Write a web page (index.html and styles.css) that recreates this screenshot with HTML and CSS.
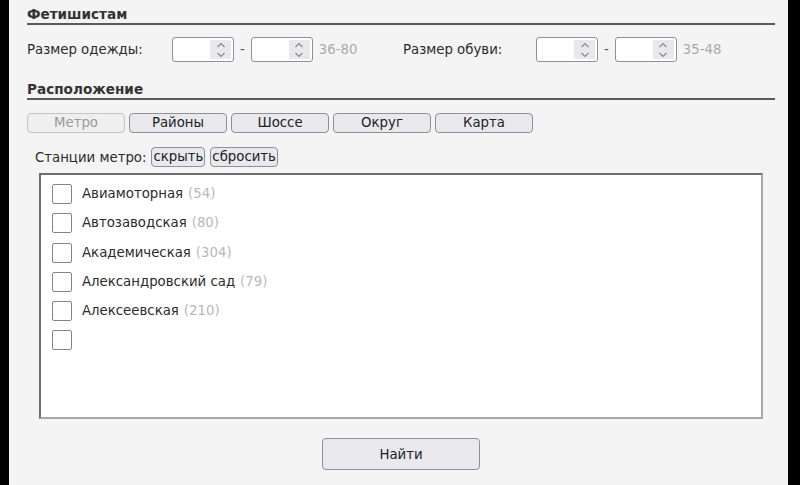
FILE: index.html
```html
<!DOCTYPE html>
<html lang="ru">
<head>
<meta charset="utf-8">
<title>Поиск</title>
<link rel="stylesheet" href="styles.css">
</head>
<body>
<div class="page">
  <div class="panel">
    <h2 class="sect first-sect">Фетишистам</h2>
    <div class="sizes">
      <div class="fgroup g1">
        <span class="flabel l1">Размер одежды:</span>
        <span class="num"><input type="text" class="num-in"><span class="spin"><svg width="10" height="18" viewBox="0 0 10 18"><path d="M1.5 6 L5 2.5 L8.5 6" fill="none" stroke="#8a8a8a" stroke-width="1.2"/><path d="M1.5 12 L5 15.5 L8.5 12" fill="none" stroke="#8a8a8a" stroke-width="1.2"/></svg></span></span>
        <span class="dash">-</span>
        <span class="num"><input type="text" class="num-in"><span class="spin"><svg width="10" height="18" viewBox="0 0 10 18"><path d="M1.5 6 L5 2.5 L8.5 6" fill="none" stroke="#8a8a8a" stroke-width="1.2"/><path d="M1.5 12 L5 15.5 L8.5 12" fill="none" stroke="#8a8a8a" stroke-width="1.2"/></svg></span></span>
        <span class="range">36-80</span>
      </div>
      <div class="fgroup g2">
        <span class="flabel l2">Размер обуви:</span>
        <span class="num"><input type="text" class="num-in"><span class="spin"><svg width="10" height="18" viewBox="0 0 10 18"><path d="M1.5 6 L5 2.5 L8.5 6" fill="none" stroke="#8a8a8a" stroke-width="1.2"/><path d="M1.5 12 L5 15.5 L8.5 12" fill="none" stroke="#8a8a8a" stroke-width="1.2"/></svg></span></span>
        <span class="dash">-</span>
        <span class="num"><input type="text" class="num-in"><span class="spin"><svg width="10" height="18" viewBox="0 0 10 18"><path d="M1.5 6 L5 2.5 L8.5 6" fill="none" stroke="#8a8a8a" stroke-width="1.2"/><path d="M1.5 12 L5 15.5 L8.5 12" fill="none" stroke="#8a8a8a" stroke-width="1.2"/></svg></span></span>
        <span class="range">35-48</span>
      </div>
    </div>

    <h2 class="sect second-sect">Расположение</h2>
    <div class="tabs">
      <button class="tab" disabled>Метро</button>
      <button class="tab">Районы</button>
      <button class="tab">Шоссе</button>
      <button class="tab">Округ</button>
      <button class="tab">Карта</button>
    </div>

    <div class="stations-row">
      <span class="st-label">Станции метро:</span>
      <button class="mini">скрыть</button>
      <button class="mini">сбросить</button>
    </div>

    <div class="listbox">
      <label class="item"><span class="cb"></span><span class="name">Авиамоторная</span><span class="cnt">(54)</span></label>
      <label class="item"><span class="cb"></span><span class="name">Автозаводская</span><span class="cnt">(80)</span></label>
      <label class="item"><span class="cb"></span><span class="name">Академическая</span><span class="cnt">(304)</span></label>
      <label class="item"><span class="cb"></span><span class="name">Александровский сад</span><span class="cnt">(79)</span></label>
      <label class="item"><span class="cb"></span><span class="name">Алексеевская</span><span class="cnt">(210)</span></label>
      <label class="item"><span class="cb"></span></label>
    </div>

    <div class="submit-row">
      <button class="find">Найти</button>
    </div>
  </div>
</div>
</body>
</html>
```

FILE: styles.css
```css
html, body {
  margin: 0;
  padding: 0;
}
body {
  background: #000;
  font-family: "DejaVu Sans", Verdana, sans-serif;
  font-size: 13.3px;
  color: #2b2b2b;
}
.page {
  display: flex;
  height: 485px;
  background: #000;
  overflow: hidden;
}
.panel {
  margin-left: 9px;
  width: 779px;
  box-sizing: border-box;
  background: #f4f4f4;
  padding: 0 13px 0 18px;
}
.sect {
  margin: 0;
  font-size: 13.6px;
  font-weight: bold;
  color: #333;
  line-height: 18px;
  padding-top: 5px;
  border-bottom: 2px solid #5a5a5a;
}
.second-sect {
  margin-top: 13px;
}
.sizes {
  display: flex;
  align-items: center;
  margin-top: 12px;
  height: 25px;
}
.fgroup {
  display: flex;
  align-items: center;
  gap: 6px;
}
.g1 {
  width: 376px;
}
.flabel {
  color: #2b2b2b;
}
.l1 {
  width: 139px;
}
.l2 {
  width: 127px;
}
.num {
  display: flex;
  align-items: stretch;
  width: 62px;
  height: 25px;
  box-sizing: border-box;
  border: 1px solid #8f8f9d;
  border-radius: 3px;
  background: #fff;
  padding: 2px 2px 2px 0;
}
.num-in {
  flex: 1;
  min-width: 0;
  border: none;
  outline: none;
  background: transparent;
  padding: 0 4px;
  font: inherit;
}
.spin {
  width: 21px;
  background: #e9e9ed;
  display: flex;
  align-items: center;
  justify-content: center;
}
.dash {
  color: #555;
}
.range {
  color: #aaa;
}
.tabs {
  display: flex;
  gap: 4px;
  margin-top: 13px;
}
.tab {
  width: 98px;
  height: 20px;
  box-sizing: border-box;
  padding: 0;
  font-family: "DejaVu Sans", Verdana, sans-serif;
  font-size: 13.3px;
  color: #222;
  background: #e9e9ed;
  border: 1px solid #8f8f9d;
  border-radius: 4px;
  line-height: 18px;
}
.tab:disabled {
  color: #9a9a9a;
  background: #efefef;
  border-color: #c4c4c8;
}
.stations-row {
  display: flex;
  align-items: center;
  gap: 5px;
  margin-top: 14px;
  padding-left: 8px;
  height: 20px;
}
.st-label {
  color: #2b2b2b;
}
.mini {
  height: 20px;
  box-sizing: border-box;
  padding: 0 1px;
  font-family: "DejaVu Sans", Verdana, sans-serif;
  font-size: 13.3px;
  color: #222;
  background: #e9e9ed;
  border: 1px solid #8f8f9d;
  border-radius: 4px;
  line-height: 18px;
}
.listbox {
  margin: 6px 12px 0 12px;
  height: 246px;
  box-sizing: border-box;
  background: #fff;
  border-style: solid;
  border-width: 2px;
  border-color: #6e6e6e #a8a8a8 #a8a8a8 #6e6e6e;
  padding: 9px 0 0 11px;
}
.item {
  display: flex;
  align-items: flex-start;
  height: 29.3px;
}
.cb {
  width: 20px;
  height: 20px;
  box-sizing: border-box;
  border: 1px solid #858585;
  border-radius: 2px;
  background: #fff;
  flex: none;
}
.name {
  margin-left: 10px;
  line-height: 20px;
  color: #2b2b2b;
}
.cnt {
  margin-left: 5px;
  line-height: 20px;
  color: #b8b8b8;
}
.submit-row {
  display: flex;
  justify-content: center;
  margin-top: 19px;
}
.find {
  width: 158px;
  height: 32px;
  font-family: "DejaVu Sans", Verdana, sans-serif;
  font-size: 13.3px;
  color: #222;
  background: #e9e9ed;
  border: 1px solid #8f8f9d;
  border-radius: 4px;
}
```
